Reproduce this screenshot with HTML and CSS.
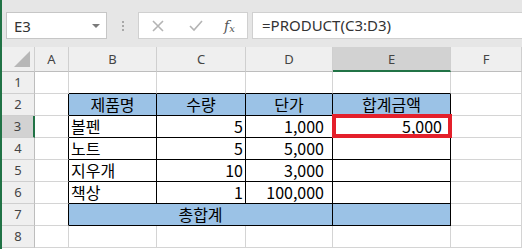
FILE: index.html
```html
<!DOCTYPE html>
<html lang="ko">
<head>
    <meta charset="UTF-8">
    <meta name="viewport" content="width=device-width, initial-scale=1.0">
    <title>합계금액</title>
    <link rel="stylesheet" href="styles.css">
</head>
<body>

<div id="window">
    <div class="toolbar">
        <div class="namebox">
            <span>E3</span>
            <span class="arrow"></span>
        </div>
        <div class="grip"><i></i><i></i><i></i></div>
        <div class="fbuttons">
            <svg class="icon" width="12" height="12" viewBox="0 0 12 12">
                <path d="M1 1 L11 11 M11 1 L1 11" stroke="#b4b4b4" stroke-width="1.6" fill="none"/>
            </svg>
            <svg class="icon" width="14" height="12" viewBox="0 0 14 12">
                <path d="M1 6 L5 10 L13 1" stroke="#b4b4b4" stroke-width="1.6" fill="none"/>
            </svg>
            <span class="fx">f<sub>x</sub></span>
        </div>
        <div class="formula">=PRODUCT(C3:D3)</div>
    </div>

    <div class="sheet">
        <!-- column headers -->
        <div class="hd corner"><span class="tri"></span></div>
        <div class="hd">A</div>
        <div class="hd">B</div>
        <div class="hd">C</div>
        <div class="hd">D</div>
        <div class="hd sel-col">E</div>
        <div class="hd">F</div>

        <!-- row 1 -->
        <div class="rh">1</div>
        <div class="c"></div>
        <div class="c tt"></div>
        <div class="c tt"></div>
        <div class="c tt"></div>
        <div class="c tt"></div>
        <div class="c"></div>

        <!-- row 2 -->
        <div class="rh">2</div>
        <div class="c tl"></div>
        <div class="c t blue ctr">제품명</div>
        <div class="c t blue ctr">수량</div>
        <div class="c t blue ctr">단가</div>
        <div class="c t blue ctr">합계금액</div>
        <div class="c"></div>

        <!-- row 3 -->
        <div class="rh sel-row">3</div>
        <div class="c tl"></div>
        <div class="c t">볼펜</div>
        <div class="c t num">5</div>
        <div class="c t num acct">1,000</div>
        <div class="c t num acct active">5,000</div>
        <div class="c"></div>

        <!-- row 4 -->
        <div class="rh">4</div>
        <div class="c tl"></div>
        <div class="c t">노트</div>
        <div class="c t num">5</div>
        <div class="c t num acct">5,000</div>
        <div class="c t"></div>
        <div class="c"></div>

        <!-- row 5 -->
        <div class="rh">5</div>
        <div class="c tl"></div>
        <div class="c t">지우개</div>
        <div class="c t num">10</div>
        <div class="c t num acct">3,000</div>
        <div class="c t"></div>
        <div class="c"></div>

        <!-- row 6 -->
        <div class="rh">6</div>
        <div class="c tl"></div>
        <div class="c t">책상</div>
        <div class="c t num">1</div>
        <div class="c t num acct">100,000</div>
        <div class="c t"></div>
        <div class="c"></div>

        <!-- row 7 -->
        <div class="rh">7</div>
        <div class="c tl"></div>
        <div class="c t blue ctr span3">총합계</div>
        <div class="c t blue"></div>
        <div class="c"></div>

        <!-- row 8 -->
        <div class="rh">8</div>
        <div class="c"></div>
        <div class="c"></div>
        <div class="c"></div>
        <div class="c"></div>
        <div class="c"></div>
        <div class="c"></div>
    </div>
</div>

</body>
</html>
```

FILE: styles.css
```css
* {
    box-sizing: border-box;
}
body {
    margin: 0;
    font-family: "Noto Sans CJK KR", "Noto Sans", sans-serif;
    background-color: #fff;
}
#window {
    width: 522px;
    height: 249px;
    overflow: hidden;
    border-left: 2px solid #217346;
}
.toolbar {
    height: 47px;
    background-color: #e6e6e6;
    display: flex;
    align-items: flex-start;
    padding-top: 12px;
    padding-left: 4px;
}
.namebox {
    width: 101px;
    height: 27px;
    background: #fff;
    border: 1px solid #c6c6c6;
    display: flex;
    align-items: center;
    justify-content: space-between;
    padding: 0 6px 0 7px;
    font-family: "Noto Sans", sans-serif;
    font-size: 15px;
    color: #333;
}
.arrow {
    width: 0;
    height: 0;
    border-left: 4px solid transparent;
    border-right: 4px solid transparent;
    border-top: 4px solid #7a7a7a;
}
.grip {
    width: 31px;
    height: 27px;
    display: flex;
    flex-direction: column;
    align-items: center;
    justify-content: center;
    gap: 2px;
}
.grip i {
    width: 2px;
    height: 2px;
    background: #a8a8a8;
}
.fbuttons {
    width: 110px;
    height: 27px;
    background: #fff;
    border: 1px solid #d0d0d0;
    display: flex;
    align-items: center;
    padding-left: 13px;
}
.fbuttons .icon + .icon {
    margin-left: 25px;
}
.fx {
    margin-left: 21px;
    font-family: "DejaVu Serif", serif;
    font-style: italic;
    font-size: 14px;
    color: #555;
}
.fx sub {
    font-size: 10px;
    vertical-align: -1px;
}
.formula {
    flex: 1;
    height: 27px;
    margin-left: 4px;
    background: #fff;
    border: 1px solid #d0d0d0;
    border-right: none;
    padding-left: 9px;
    font-family: "Noto Sans", sans-serif;
    font-size: 15px;
    line-height: 24px;
    color: #333;
}
.sheet {
    display: grid;
    grid-template-columns: 33px 34px 88px 89px 87px 118px 1fr;
    grid-template-rows: 25px repeat(8, 22px);
}
.hd {
    background: #efefef;
    border-right: 1px solid #cfcfcf;
    border-bottom: 1px solid #bdbdbd;
    text-align: center;
    font-family: "Noto Sans", sans-serif;
    font-size: 13px;
    line-height: 24px;
    color: #444;
}
.corner {
    position: relative;
}
.tri {
    position: absolute;
    right: 4px;
    bottom: 4px;
    width: 0;
    height: 0;
    border-left: 16px solid transparent;
    border-bottom: 16px solid #b7b7b7;
}
.sel-col {
    background: #d2d2d2;
    border-bottom: 2px solid #217346;
}
.rh {
    background: #efefef;
    border-right: 1px solid #bdbdbd;
    border-bottom: 1px solid #cfcfcf;
    text-align: center;
    font-family: "Noto Sans", sans-serif;
    font-size: 13px;
    line-height: 21px;
    color: #444;
}
.sel-row {
    background: #d2d2d2;
    border-right: 2px solid #217346;
}
.c {
    border-right: 1px solid #d4d4d4;
    border-bottom: 1px solid #d4d4d4;
    padding: 0 2px;
    font-size: 16px;
    line-height: 21px;
    color: #000;
    white-space: nowrap;
}
.tt {
    border-bottom-color: #000;
}
.tl {
    border-right-color: #000;
}
.t {
    border-right-color: #000;
    border-bottom-color: #000;
}
.blue {
    background-color: #9bc2e6;
}
.ctr {
    text-align: center;
}
.num {
    text-align: right;
}
/* comma style leaves a space after the number */
.acct {
    padding-right: 8px;
}
.span3 {
    grid-column: span 3;
}
.active {
    position: relative;
    z-index: 1;
}
.active::after {
    content: "";
    position: absolute;
    top: -2px;
    left: -1px;
    right: -2px;
    bottom: -1px;
    border: 4px solid #e4202b;
}
```
